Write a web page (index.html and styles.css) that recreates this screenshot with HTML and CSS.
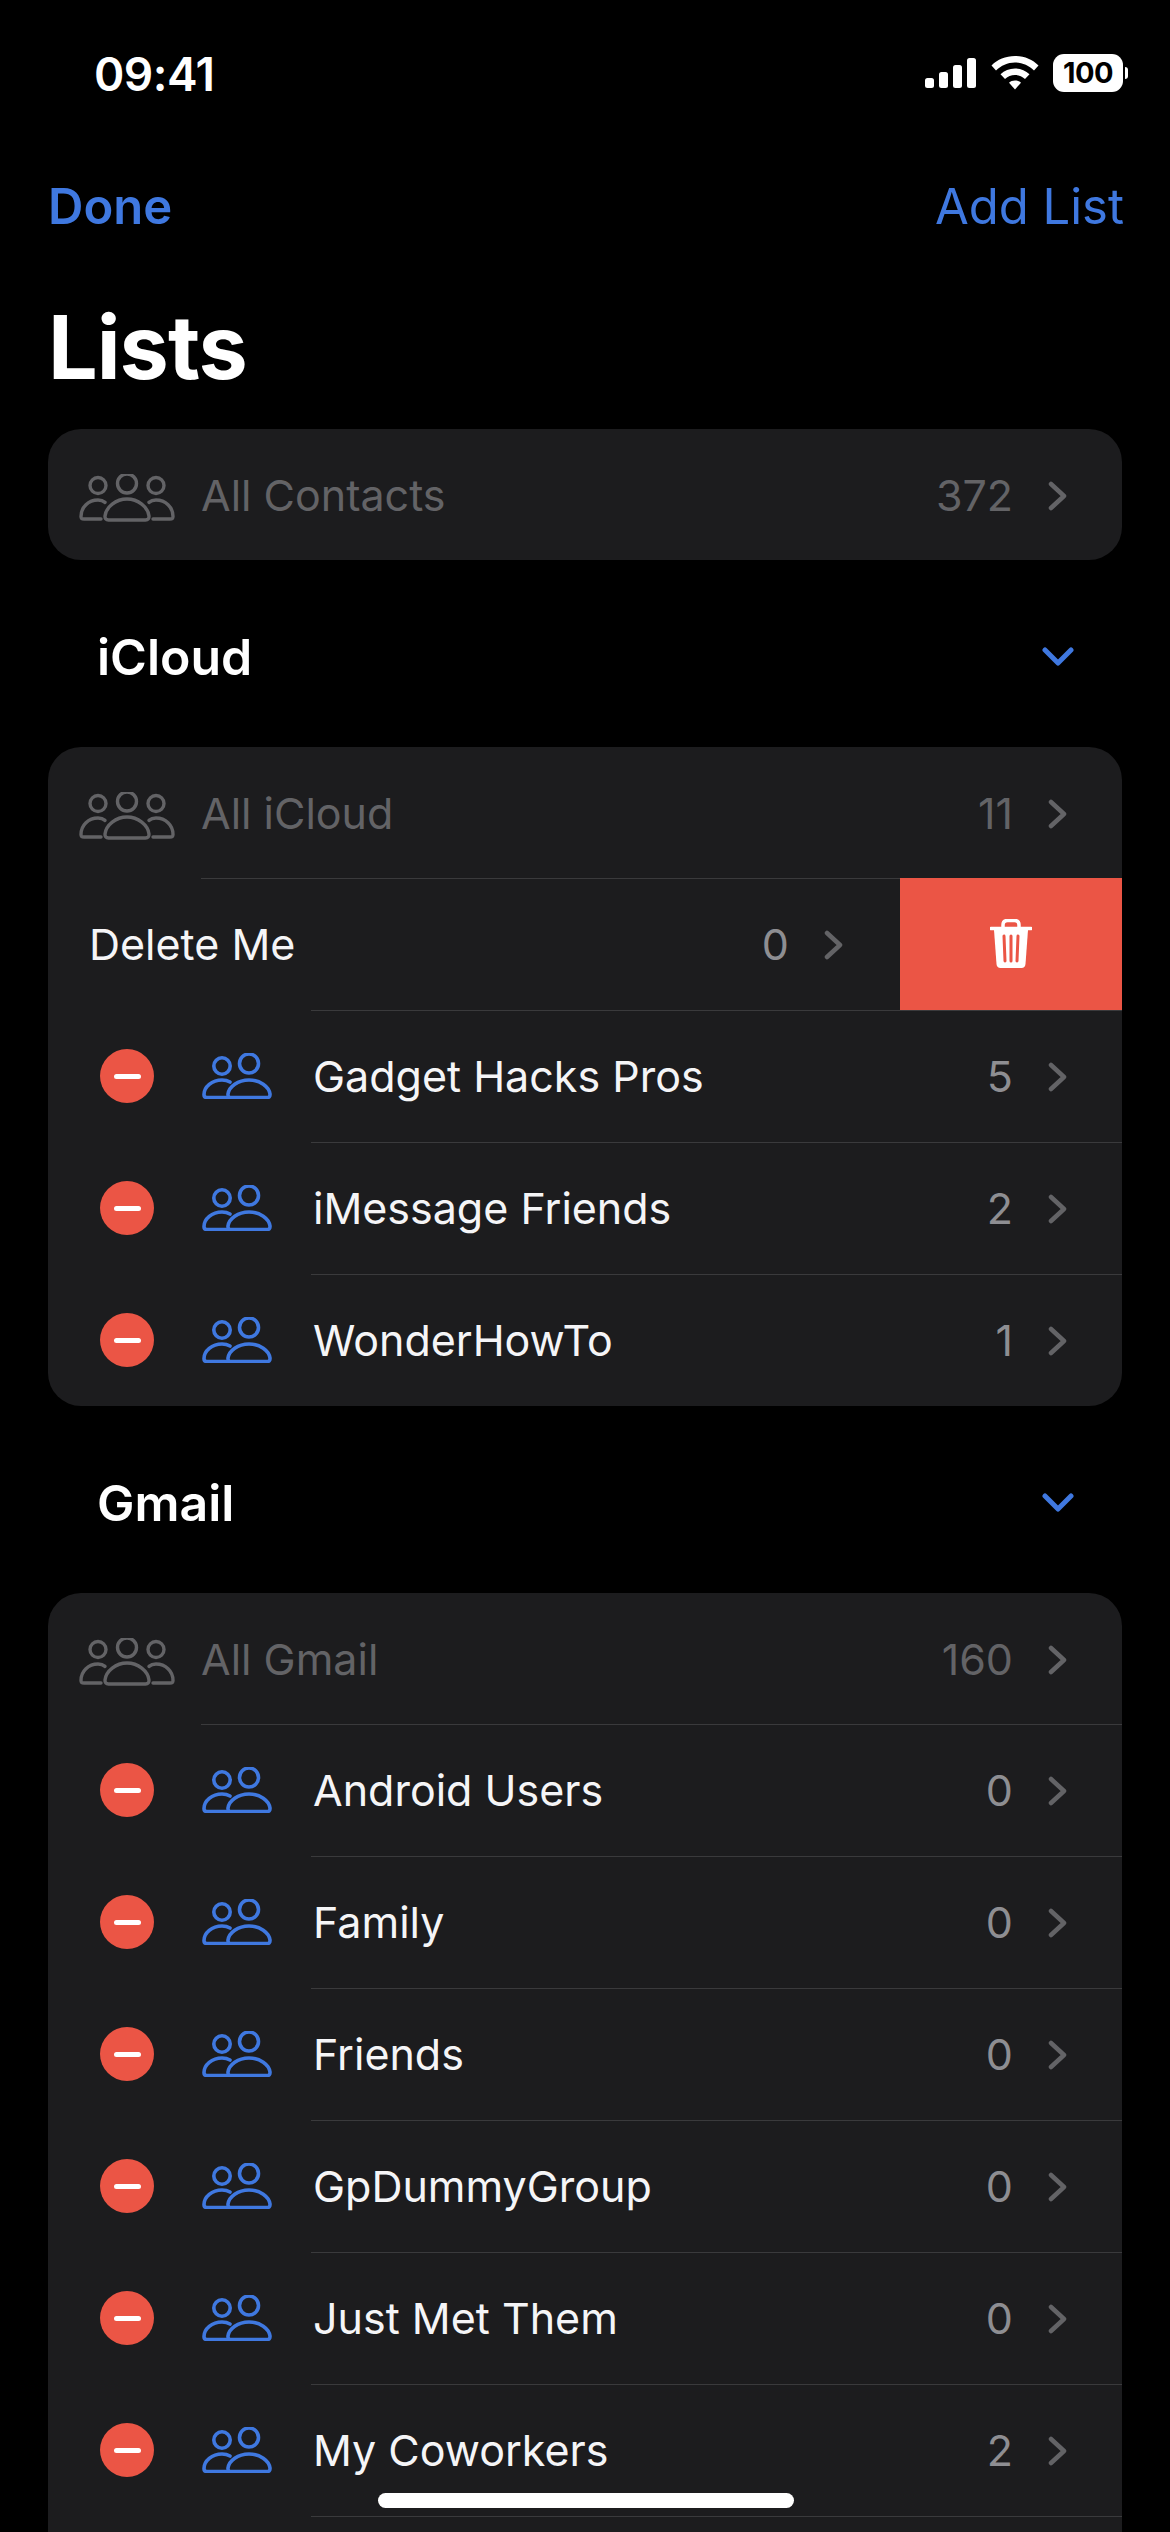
FILE: index.html
```html
<!DOCTYPE html>
<html lang="en">
<head>
<meta charset="utf-8">
<title>Lists</title>
<link rel="stylesheet" href="styles.css">
</head>
<body>
<svg class="defs" width="0" height="0" aria-hidden="true">
  <defs>
    <symbol id="three" viewBox="0 0 96 48">
      <g fill="none" stroke="currentColor" stroke-width="3.4" stroke-linecap="round" stroke-linejoin="round">
        <circle cx="19" cy="11.5" r="8"/>
        <circle cx="48" cy="9.5" r="9.5"/>
        <circle cx="77" cy="11.5" r="8"/>
        <path d="M26 28.4C23.800 26.500 21.500 26 19 26C9.500 26 2 33 2 42.500C2 44.500 3 45 5 45H22"/>
        <path d="M70 28.400C72.200 26.500 74.500 26 77 26C86.500 26 94 33 94 42.500C94 44.500 93 45 91 45H74"/>
        <path d="M48 25C37 25 27 33 26 42C25.800 44.500 27 46 29.500 46H66.500C69 46 70.200 44.500 70 42C69 33 59 25 48 25Z"/>
      </g>
    </symbol>
    <symbol id="two" viewBox="0 0 70 46">
      <g fill="none" stroke="currentColor" stroke-width="3.600" stroke-linecap="round" stroke-linejoin="round">
        <circle cx="20" cy="13" r="8.200"/>
        <circle cx="47" cy="10.500" r="9.500"/>
        <path d="M28 29C25.500 27.500 23 27 20 27C10 27 2 34 2 41.500C2 43.500 3 44.500 5 44.500H27"/>
        <path d="M47 27C36 27 27 33.500 26 41C25.800 43.500 27 44.500 29 44.500H65C67 44.500 68.200 43.500 68 41C67 33.500 58 27 47 27Z"/>
      </g>
    </symbol>
    <symbol id="chev" viewBox="0 0 20 30">
      <path d="M3 3L16 15L3 27" fill="none" stroke="currentColor" stroke-width="4.500" stroke-linecap="round" stroke-linejoin="round"/>
    </symbol>
  </defs>
</svg>
<main class="phone">
  <header class="status">
    <span class="time">09:41</span>
    <div class="status-icons">
      <svg class="signal" viewBox="0 0 52 30" aria-hidden="true"><rect x="0" y="20" width="9" height="10" rx="2.500"/><rect x="14" y="14" width="9" height="16" rx="2.500"/><rect x="28" y="7" width="9" height="23" rx="2.500"/><rect x="42" y="0" width="9" height="30" rx="2.500"/></svg>
      <svg class="wifi" viewBox="0 0 48 34" aria-hidden="true"><path d="M24 0C33.500 0 41.500 3.500 47.500 9.500L43 14.500C37.800 9.500 31.500 6.500 24 6.500C16.500 6.500 10.200 9.500 5 14.500L.5 9.500C6.500 3.500 14.500 0 24 0Z"/><path d="M24 12.500C29.800 12.500 34.500 14.600 38.500 18.200L34 23C31 20.500 28 19 24 19C20 19 17 20.500 14 23L9.500 18.200C13.500 14.600 18.200 12.500 24 12.500Z"/><path d="M24 24.500C26.500 24.500 28.500 25.300 30 26.700L24 33.500L18 26.700C19.500 25.300 21.500 24.500 24 24.500Z"/></svg>
      <div class="battery"><span class="battery-body">100</span><span class="battery-tip"></span></div>
    </div>
  </header>
  <nav class="nav">
    <span class="done">Done</span>
    <span class="add">Add List</span>
  </nav>
  <h1 class="title">Lists</h1>

  <section class="card">
    <div class="row dim first">
      <svg class="ico-three"><use href="#three"/></svg>
      <span class="name">All Contacts</span><span class="count">372</span><svg class="chev"><use href="#chev"/></svg>
    </div>
  </section>

  <div class="section-head"><span>iCloud</span><svg class="down" viewBox="0 0 32 20" aria-hidden="true"><path d="M3 3L16 16L29 3"/></svg></div>
  <section class="card">
    <div class="row dim first">
      <svg class="ico-three"><use href="#three"/></svg>
      <span class="name">All iCloud</span><span class="count">11</span><svg class="chev"><use href="#chev"/></svg>
    </div>
    <div class="row swiped">
      <div class="swiped-body"><span class="name">Delete Me</span><span class="count">0</span><svg class="chev"><use href="#chev"/></svg></div>
      <div class="trash">
        <svg viewBox="0 0 42 50" aria-hidden="true"><path class="trash-fill" d="M4 11H38L35.500 45C35.300 47.500 33.800 49 31.500 49H10.500C8.200 49 6.700 47.500 6.500 45Z"/><path class="trash-top" d="M1 9.500H41M13 9V6C13 3 15 1.500 17.500 1.500H24.500C27 1.500 29 3 29 6V9"/><path class="trash-ribs" d="M14 17L15 42M21 17V42M28 17L27 42"/></svg>
      </div>
    </div>
    <div class="row edit"><span class="minus"></span><svg class="ico-two"><use href="#two"/></svg><div class="row-main"><span class="name">Gadget Hacks Pros</span><span class="count">5</span><svg class="chev"><use href="#chev"/></svg></div></div>
    <div class="row edit"><span class="minus"></span><svg class="ico-two"><use href="#two"/></svg><div class="row-main"><span class="name">iMessage Friends</span><span class="count">2</span><svg class="chev"><use href="#chev"/></svg></div></div>
    <div class="row edit"><span class="minus"></span><svg class="ico-two"><use href="#two"/></svg><div class="row-main"><span class="name">WonderHowTo</span><span class="count">1</span><svg class="chev"><use href="#chev"/></svg></div></div>
  </section>

  <div class="section-head"><span>Gmail</span><svg class="down" viewBox="0 0 32 20" aria-hidden="true"><path d="M3 3L16 16L29 3"/></svg></div>
  <section class="card">
    <div class="row dim first">
      <svg class="ico-three"><use href="#three"/></svg>
      <span class="name">All Gmail</span><span class="count">160</span><svg class="chev"><use href="#chev"/></svg>
    </div>
    <div class="row edit wide"><span class="minus"></span><svg class="ico-two"><use href="#two"/></svg><div class="row-main"><span class="name">Android Users</span><span class="count">0</span><svg class="chev"><use href="#chev"/></svg></div></div>
    <div class="row edit"><span class="minus"></span><svg class="ico-two"><use href="#two"/></svg><div class="row-main"><span class="name">Family</span><span class="count">0</span><svg class="chev"><use href="#chev"/></svg></div></div>
    <div class="row edit"><span class="minus"></span><svg class="ico-two"><use href="#two"/></svg><div class="row-main"><span class="name">Friends</span><span class="count">0</span><svg class="chev"><use href="#chev"/></svg></div></div>
    <div class="row edit"><span class="minus"></span><svg class="ico-two"><use href="#two"/></svg><div class="row-main"><span class="name">GpDummyGroup</span><span class="count">0</span><svg class="chev"><use href="#chev"/></svg></div></div>
    <div class="row edit"><span class="minus"></span><svg class="ico-two"><use href="#two"/></svg><div class="row-main"><span class="name">Just Met Them</span><span class="count">0</span><svg class="chev"><use href="#chev"/></svg></div></div>
    <div class="row edit"><span class="minus"></span><svg class="ico-two"><use href="#two"/></svg><div class="row-main"><span class="name">My Coworkers</span><span class="count">2</span><svg class="chev"><use href="#chev"/></svg></div></div>
    <div class="row edit"><div class="row-main"></div></div>
  </section>
</main>
<div class="home-bar"></div>
</body>
</html>
```
FILE: styles.css
```css
* { box-sizing: border-box; }
html, body { margin: 0; padding: 0; background: #000; }
body { width: 1170px; height: 2532px; overflow: hidden; font-family: Inter, "Liberation Sans", sans-serif; color: #fff; position: relative; }
.defs { position: absolute; }
.phone { display: flex; flex-direction: column; height: 2532px; overflow: hidden; padding: 0 48px; }

.status { height: 150px; flex: none; display: flex; justify-content: space-between; align-items: flex-start; margin: 0 -48px; padding: 50px 48px 0 94px; }
.time { font-size: 46px; font-weight: 600; line-height: 48px; letter-spacing: -.5px; }
.status-icons { display: flex; align-items: center; gap: 14px; margin: 5px 0 0; height: 36px; padding-right: 0; margin-right: -6px; }
.signal { width: 52px; height: 30px; fill: #fff; }
.wifi { width: 48px; height: 34px; fill: #fff; }
.battery { display: flex; align-items: center; gap: 2px; }
.battery-body { width: 70px; height: 38px; border-radius: 11px; background: #fff; color: #000; font-size: 29px; font-weight: 700; line-height: 38px; text-align: center; letter-spacing: -.5px; }
.battery-tip { width: 3px; height: 12px; background: #fff; border-radius: 0 3px 3px 0; }

.nav { height: 112px; flex: none; display: flex; justify-content: space-between; align-items: center; font-size: 49px; color: #3f78e0; margin-top: 0; }
.done { font-weight: 600; }
.add { font-weight: 400; margin-right: -2px; }
.title { margin: 0; height: 167px; flex: none; font-size: 88px; font-weight: 700; line-height: 170px; letter-spacing: -1px; }

.card { flex: none; background: #1c1c1e; border-radius: 33px; overflow: hidden; }

.row { height: 132px; display: flex; align-items: center; position: relative; font-size: 43px; }
.name { flex: 1; color: #f5f5f7; }
.count { font-size: 43px; color: #8e8e92; }
.chev { width: 20px; height: 30px; margin: 2px 0 0 35px; color: #636366; flex: none; }

.dim { padding: 0 54px 0 31px; }
.dim.first { height: 131px; }
.ico-three { width: 96px; height: 48px; color: #636366; flex: none; margin: 6px 26px 0 0; }
.dim .name { color: #636366; }
.dim .count { color: #636366; }

.section-head { flex: none; height: 187px; display: flex; align-items: center; justify-content: space-between; padding: 6px 48px 0 49px; font-size: 50px; font-weight: 600; }
.down { width: 32px; height: 20px; fill: none; stroke: #3f78e0; stroke-width: 5; stroke-linecap: round; stroke-linejoin: round; }

.swiped { padding: 0 0 0 0; }
.swiped::before, .edit::before { content: ""; position: absolute; top: 0; right: 0; height: 1px; background: #3a3a3c; }
.swiped::before { left: 153px; right: 222px; }
.swiped-body { flex: 1; display: flex; align-items: center; padding: 0 56px 0 41px; }
.trash { width: 222px; height: 132px; margin-top: 0; background: #eb5545; display: flex; align-items: center; justify-content: center; flex: none; }
.trash svg { width: 42px; height: 50px; }
.trash-fill { fill: #fff; }
.trash-top { fill: none; stroke: #fff; stroke-width: 3.500; stroke-linecap: round; }
.trash-ribs { fill: none; stroke: #eb5545; stroke-width: 3; stroke-linecap: round; }

.edit { padding: 0 54px 0 52px; }
.edit::before { left: 263px; }
.edit.wide::before { left: 153px; }
.minus { width: 54px; height: 54px; border-radius: 50%; background: #eb5545; flex: none; display: flex; align-items: center; justify-content: center; margin-right: 48px; }
.minus::before { content: ""; width: 27px; height: 5px; border-radius: 3px; background: #fff; }
.ico-two { width: 70px; height: 46px; color: #3f78e0; flex: none; margin: 0 41px 0 0; }
.row-main { flex: 1; display: flex; align-items: center; }

.home-bar { position: absolute; left: 378px; top: 2493px; width: 416px; height: 15px; border-radius: 8px; background: #fff; }
```
